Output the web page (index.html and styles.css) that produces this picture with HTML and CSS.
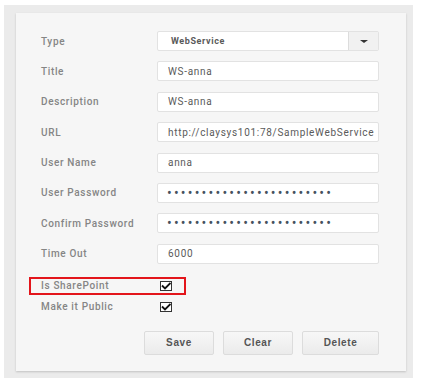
FILE: index.html
```html
<!DOCTYPE html>
<html lang="en">
<head>
    <meta charset="UTF-8" />
    <title>Web Service</title>
    <link rel="stylesheet" href="styles.css">
</head>
<body>
    <div class="outer">
        <div class="card">
            <div class="row">
                <label>Type</label>
                <div class="select">
                    <span class="select-value">WebService</span>
                    <span class="select-btn"><span class="caret"></span></span>
                </div>
            </div>
            <div class="row">
                <label>Title</label>
                <input class="field" type="text" value="WS-anna" readonly>
            </div>
            <div class="row">
                <label>Description</label>
                <input class="field" type="text" value="WS-anna" readonly>
            </div>
            <div class="row">
                <label>URL</label>
                <input class="field" type="text" value="http://claysys101:78/SampleWebService.asmx" readonly>
            </div>
            <div class="row">
                <label>User Name</label>
                <input class="field" type="text" value="anna" readonly>
            </div>
            <div class="row">
                <label>User Password</label>
                <input class="field pwd" type="password" value="xxxxxxxxxxxxxxxxxxxxxxxx" readonly>
            </div>
            <div class="row">
                <label>Confirm Password</label>
                <input class="field pwd" type="password" value="xxxxxxxxxxxxxxxxxxxxxxxx" readonly>
            </div>
            <div class="row">
                <label>Time Out</label>
                <input class="field" type="text" value="6000" readonly>
            </div>

            <div class="check-row marked">
                <label>Is SharePoint</label>
                <span class="box">
                    <svg width="10" height="8" viewBox="0 0 10 8"><path d="M1 3.5 L4 6.5 L9.5 1" fill="none" stroke="#111" stroke-width="1.8"/></svg>
                </span>
            </div>
            <div class="check-row">
                <label>Make it Public</label>
                <span class="box">
                    <svg width="10" height="8" viewBox="0 0 10 8"><path d="M1 3.5 L4 6.5 L9.5 1" fill="none" stroke="#111" stroke-width="1.8"/></svg>
                </span>
            </div>

            <div class="buttons">
                <button class="btn save">Save</button>
                <button class="btn clear">Clear</button>
                <button class="btn delete">Delete</button>
            </div>
        </div>
    </div>
</body>
</html>
```

FILE: styles.css
```css
*{margin:0;padding:0;box-sizing:border-box;}
body{background:#fff;font-family:Roboto,"Liberation Sans",sans-serif;}
.outer{
    margin:5px 13px 5px 4px;
    height:373px;
    background:#ebebeb;
    padding:8px 7px 7px 12px;
}
.card{
    height:358px;
    background:#f6f6f6;
    box-shadow:0 1px 2px rgba(0,0,0,0.18);
    padding:18px 27px 0 25px;
}
.row{
    display:flex;
    align-items:center;
    height:20px;
    margin-bottom:10.4px;
}
.row label,.check-row label{
    width:116px;
    flex:none;
    font-size:10px;
    font-weight:500;
    letter-spacing:0.65px;
    color:#858585;
}
.field,.select{
    flex:1;
    height:20px;
    background:#fff;
    border:1px solid #e2e2e2;
    border-radius:2px;
}
.field{
    font-family:Roboto,"Liberation Sans",sans-serif;
    font-size:10px;
    letter-spacing:0.7px;
    color:#5a5a5a;
    padding:0 4px 0 10px;
    outline:none;
}
.field.pwd{letter-spacing:2.2px;color:#45515e;font-size:14px;padding-left:9px;}
.select{display:flex;align-items:center;}
.select-value{
    flex:1;
    padding-left:13px;
    font-size:9px;
    font-weight:700;
    letter-spacing:0.6px;
    color:#5a5a5a;
}
.select-btn{
    width:30px;
    height:100%;
    border-left:1px solid #dcdcdc;
    background:#f1f1f1;
    display:flex;
    align-items:center;
    justify-content:center;
}
.caret{
    width:0;height:0;
    border-left:4.5px solid transparent;
    border-right:4.5px solid transparent;
    border-top:3.5px solid #333;
}
.check-row{
    display:flex;
    align-items:center;
    height:18px;
}
.marked{
    margin:13px 0 0 -12px;
    width:157px;
    padding-left:10px;
    border:2px solid #e3151b;
}
.check-row + .check-row{margin-top:3px;padding-left:0;}
.box{
    margin-left:3px;
    width:12px;
    height:10px;
    border:1px solid #333;
    background:#fff;
    display:flex;
    align-items:center;
    justify-content:center;
}
.buttons{
    display:flex;
    justify-content:flex-end;
    gap:9px;
    margin-top:15px;
}
.btn{
    height:24px;
    width:70px;
    border:1px solid #dcdcdc;
    border-radius:2px;
    background:linear-gradient(#f7f7f7,#ebebeb);
    font-family:"Liberation Sans",sans-serif;
    font-size:10px;
    font-weight:700;
    letter-spacing:0.6px;
    color:#555;
}
.btn.delete{width:77px;}
```
